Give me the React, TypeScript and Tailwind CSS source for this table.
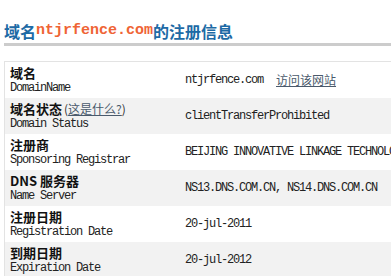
const rows = [
  { cn: '域名', en: 'DomainName', value: 'ntjrfence.com', link: '访问该网站', what: false },
  { cn: '域名状态', en: 'Domain Status', value: 'clientTransferProhibited', what: true },
  { cn: '注册商', en: 'Sponsoring Registrar', value: 'BEIJING INNOVATIVE LINKAGE TECHNOLOGY LTD. DBA DNS.COM.CN' },
  { cn: 'DNS 服务器', en: 'Name Server', value: 'NS13.DNS.COM.CN, NS14.DNS.COM.CN' },
  { cn: '注册日期', en: 'Registration Date', value: '20-jul-2011' },
  { cn: '到期日期', en: 'Expiration Date', value: '20-jul-2012' },
];

const mono = "font-['Liberation_Mono',monospace] text-[12px] tracking-[-1.2px]";

export default function App() {
  return (
    <div className="h-[276px] w-[391px] overflow-hidden bg-white font-['Noto_Sans_CJK_SC','Noto_Sans',sans-serif] text-[#222]">
      <div className="pl-1 pt-[21px]">
        <h2 className="flex h-[20px] items-center text-[16px] font-bold leading-[20px] text-[#1d6aa5]">
          域名
          <span className="font-['Liberation_Mono',monospace] text-[15px] font-bold text-[#ef6435]">ntjrfence.com</span>
          的注册信息
        </h2>
        <div className="mt-[2px] h-[3px] bg-[#cccccc]" />
        <div className="mt-[15px] w-[600px] border-l border-t border-[#e3e3e3]">
          {rows.map((r, i) => (
            <div
              key={r.en}
              className={`flex h-[36px] items-center ${i % 2 === 1 ? 'bg-[#f2f2f2]' : 'bg-white'}`}
            >
              <div className="w-[180px] shrink-0 pl-[5px]">
                <div className="flex items-center text-[13px] font-bold leading-[17px] text-[#111]">
                  {r.cn}
                  {r.what && (
                    <span className="ml-[2px] text-[12px] font-normal text-[#333]">
                      (<span className="text-[#4a5a6c] underline">这是什么?</span>)
                    </span>
                  )}
                </div>
                <div className={`${mono} leading-[15px] text-[#222]`}>{r.en}</div>
              </div>
              <div className="flex items-center whitespace-nowrap">
                <span className={`${mono} text-[#222]`}>{r.value}</span>
                {r.link && (
                  <span className="ml-[13px] text-[12px] text-[#4a5a6c] underline">{r.link}</span>
                )}
              </div>
            </div>
          ))}
        </div>
      </div>
    </div>
  );
}
